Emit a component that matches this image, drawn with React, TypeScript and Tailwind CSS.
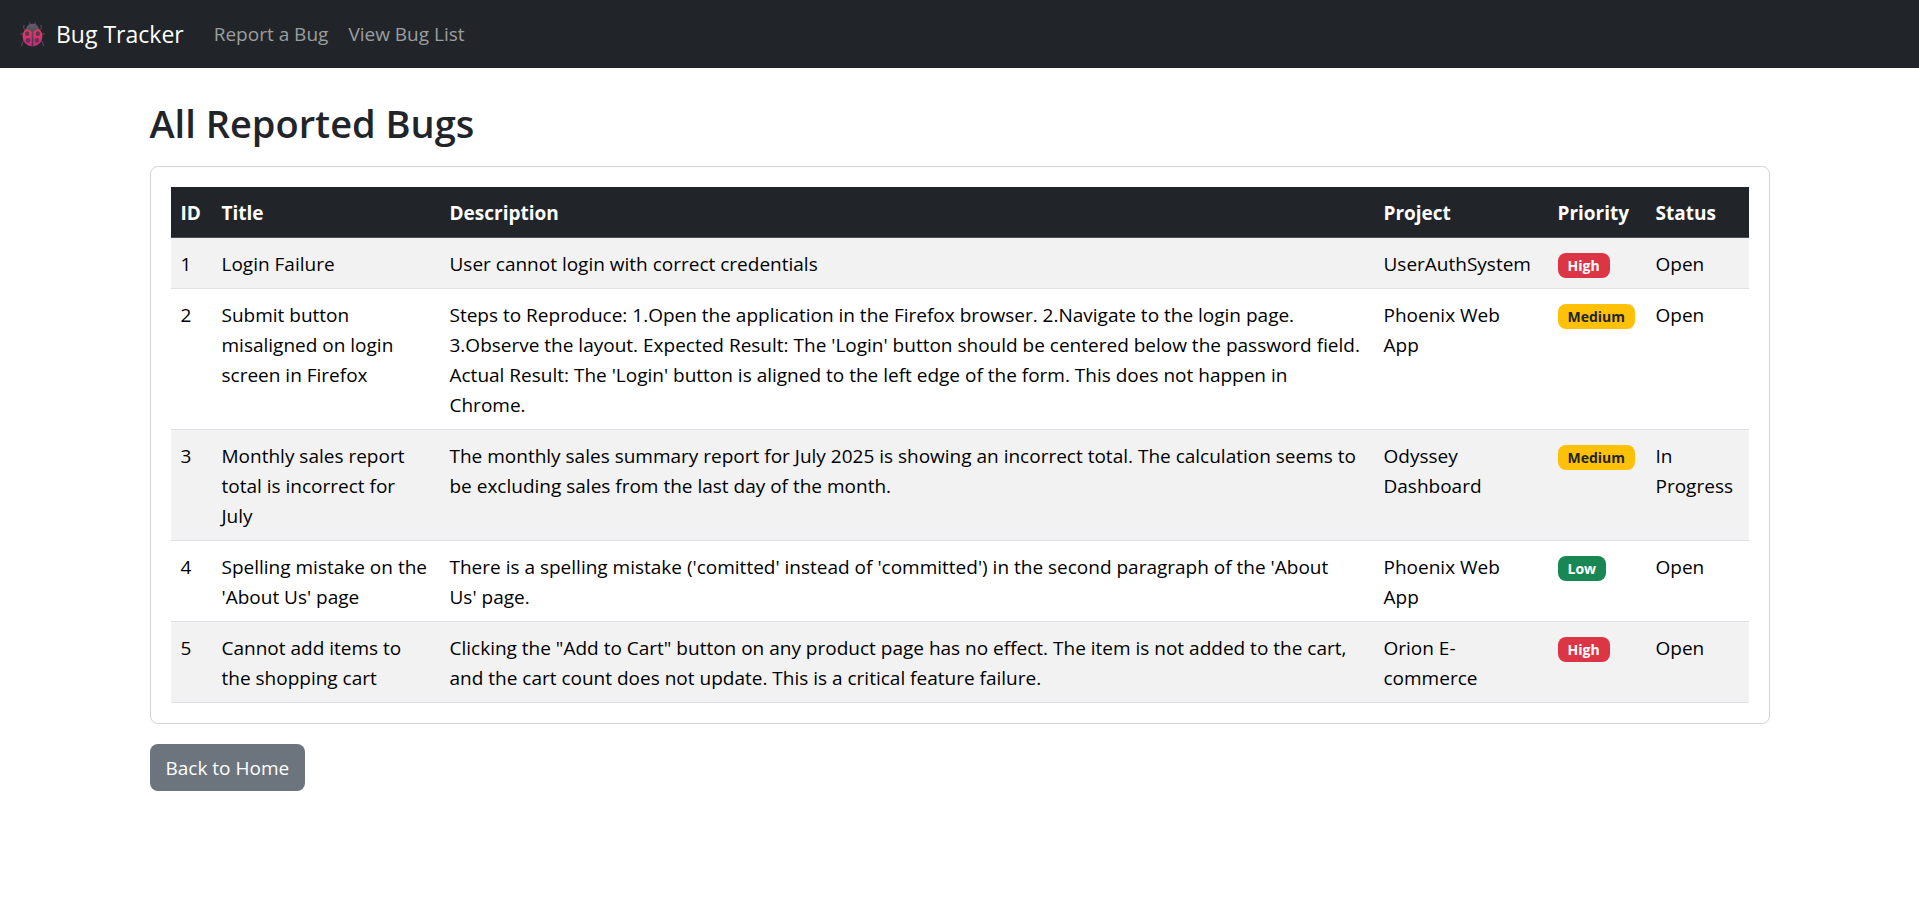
type Priority = "High" | "Medium" | "Low";

interface Bug {
  id: number;
  title: string;
  description: string;
  project: string;
  priority: Priority;
  status: string;
}

const bugs: Bug[] = [
  {
    id: 1,
    title: "Login Failure",
    description: "User cannot login with correct credentials",
    project: "UserAuthSystem",
    priority: "High",
    status: "Open",
  },
  {
    id: 2,
    title: "Submit button misaligned on login screen in Firefox",
    description:
      "Steps to Reproduce: 1.Open the application in the Firefox browser. 2.Navigate to the login page. 3.Observe the layout. Expected Result: The 'Login' button should be centered below the password field. Actual Result: The 'Login' button is aligned to the left edge of the form. This does not happen in Chrome.",
    project: "Phoenix Web App",
    priority: "Medium",
    status: "Open",
  },
  {
    id: 3,
    title: "Monthly sales report total is incorrect for July",
    description:
      "The monthly sales summary report for July 2025 is showing an incorrect total. The calculation seems to be excluding sales from the last day of the month.",
    project: "Odyssey Dashboard",
    priority: "Medium",
    status: "In Progress",
  },
  {
    id: 4,
    title: "Spelling mistake on the 'About Us' page",
    description:
      "There is a spelling mistake ('comitted' instead of 'committed') in the second paragraph of the 'About Us'\u00a0page.",
    project: "Phoenix Web App",
    priority: "Low",
    status: "Open",
  },
  {
    id: 5,
    title: "Cannot add items to the shopping cart",
    description:
      'Clicking the "Add to Cart" button on any product page has no effect. The item is not added to the cart, and the cart count does not update. This is a critical feature failure.',
    project: "Orion E-commerce",
    priority: "High",
    status: "Open",
  },
];

const badgeColors: Record<Priority, string> = {
  High: "bg-[#dc3545] text-white",
  Medium: "bg-[#ffc107] text-[#212529]",
  Low: "bg-[#198754] text-white",
};

const columns = [
  { name: "ID", width: "w-[41px]" },
  { name: "Title", width: "w-[228px]" },
  { name: "Description", width: "w-auto" },
  { name: "Project", width: "w-[174px]" },
  { name: "Priority", width: "w-[98px]" },
  { name: "Status", width: "w-[103px]" },
];

const cell = "px-[10px] pt-[11px] pb-[9px]";

function LadybugIcon() {
  return (
    <svg viewBox="0 0 75 75" className="size-[25px] shrink-0" aria-hidden="true">
      <defs>
        <linearGradient id="shell" x1="0" y1="0" x2="0" y2="1">
          <stop offset="0" stopColor="#e63c5c" />
          <stop offset="1" stopColor="#c22a7c" />
        </linearGradient>
        <linearGradient id="head" x1="0" y1="0" x2="0" y2="1">
          <stop offset="0" stopColor="#625a68" />
          <stop offset="1" stopColor="#3c3543" />
        </linearGradient>
      </defs>
      <g fill="none" stroke="#5c5265" strokeWidth="3" strokeLinecap="round" strokeLinejoin="round">
        <path d="M31 8 29 2M44 8l2-6" />
        <path d="M16 24 11 19 12 10M59 24l5-5-1-9" />
        <path d="M11 38 6 35 2 36M64 38l5-3 4 1" />
        <path d="M13 55 7 60 5 71M62 55l6 5 2 11" />
      </g>
      <path
        d="M37.500 20C20 13 7 27 8 45c1 17 14 28 29.500 28S66 62 67 45C68 27 55 13 37.500 20Z"
        fill="url(#shell)"
      />
      <path d="M18 21C20 10 27 5 37.500 5S55 10 57 21Q50 23 40 29v44h-5V29Q25 23 18 21Z" fill="url(#head)" />
      <g fill="#653052">
        <ellipse cx="21.500" cy="35" rx="6.500" ry="7" />
        <ellipse cx="53.500" cy="35" rx="6.500" ry="7" />
        <ellipse cx="24" cy="55" rx="6.500" ry="7" />
        <ellipse cx="51" cy="55" rx="6.500" ry="7" />
      </g>
    </svg>
  );
}

function Navbar() {
  return (
    <nav className="flex flex-wrap items-center bg-[#212529] px-5 py-[10px]">
      <a href="#" className="mr-5 flex items-center gap-[11px] py-1 text-[23px] leading-10 text-white">
        <LadybugIcon />
        Bug Tracker
      </a>
      <ul className="flex text-[19px] leading-[30px] text-[#9b9d9f]">
        <li>
          <a href="#report" className="block px-[10px] py-[9px] hover:text-white">
            Report a Bug
          </a>
        </li>
        <li>
          <a href="#bugs" className="block px-[10px] py-[9px] hover:text-white">
            View Bug List
          </a>
        </li>
      </ul>
    </nav>
  );
}

function PriorityBadge({ priority }: { priority: Priority }) {
  return (
    <span
      className={`block w-fit rounded-lg px-[10px] py-[5px] text-sm leading-[15px] font-bold ${badgeColors[priority]}`}
    >
      {priority}
    </span>
  );
}

function BugTable() {
  return (
    <table className="w-full table-fixed border-collapse text-left text-[19px] leading-[30px] text-black">
      <thead>
        <tr className="border-b border-[#4d5154] bg-[#212529] text-white">
          {columns.map((column) => (
            <th key={column.name} scope="col" className={`${cell} font-bold ${column.width}`}>
              {column.name}
            </th>
          ))}
        </tr>
      </thead>
      <tbody>
        {bugs.map((bug) => (
          <tr key={bug.id} className="border-b border-[#dee2e6] align-top odd:bg-[#f2f2f2]">
            <td className={cell}>{bug.id}</td>
            <td className={cell}>{bug.title}</td>
            <td className={cell}>{bug.description}</td>
            <td className={cell}>{bug.project}</td>
            <td className="px-[10px] pt-[15px] pb-[9px]">
              <PriorityBadge priority={bug.priority} />
            </td>
            <td className={cell}>{bug.status}</td>
          </tr>
        ))}
      </tbody>
    </table>
  );
}

export default function App() {
  return (
    <div className="min-h-screen bg-white font-['Open_Sans','Noto_Sans',sans-serif] text-[#212529]">
      <Navbar />
      <main className="mx-auto max-w-[1650px] px-[15px] pt-[31px]">
        <h1 className="mb-[19px] text-[38px] leading-[48px] font-semibold">All Reported Bugs</h1>
        <section className="rounded-lg border border-[#d3d3d4] p-5">
          <BugTable />
        </section>
        <a
          href="#"
          className="mt-5 inline-block rounded-lg bg-[#6c757d] px-4 pt-[9px] pb-2 text-[19px] leading-[30px] text-white hover:bg-[#5c636a]"
        >
          Back to Home
        </a>
      </main>
    </div>
  );
}
